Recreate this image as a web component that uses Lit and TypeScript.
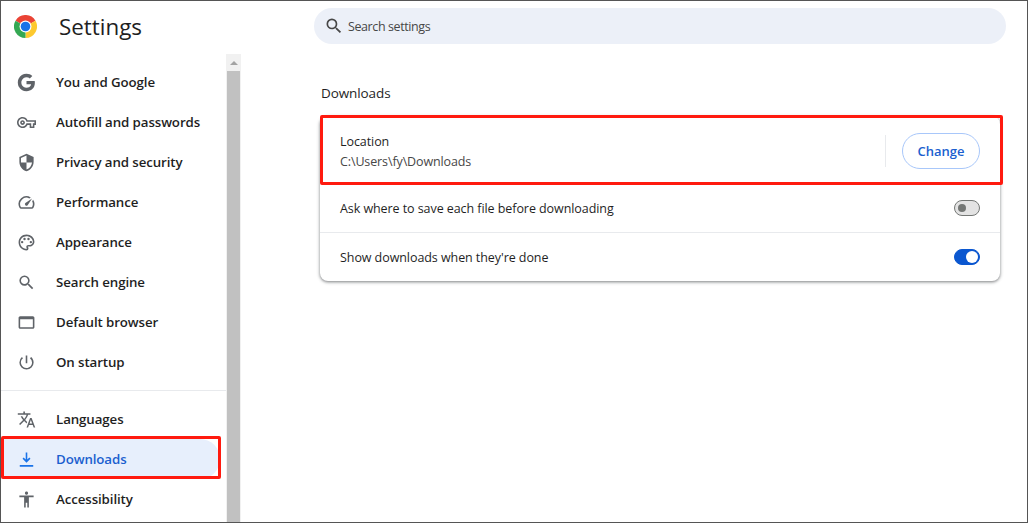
import { html, LitElement, css, svg } from 'lit';
import { customElement } from 'lit/decorators.js';

const icons: Record<string, unknown> = {
  google: svg`<path d="M22.56 12.25c0-.78-.07-1.53-.2-2.25H12v4.26h5.92c-.26 1.37-1.04 2.53-2.21 3.31v2.77h3.57c2.08-1.92 3.28-4.74 3.28-8.09z"/><path d="M12 23c2.97 0 5.46-.98 7.28-2.66l-3.57-2.77c-.98.66-2.23 1.06-3.71 1.06-2.86 0-5.29-1.93-6.16-4.53H2.18v2.84C3.99 20.53 7.7 23 12 23z"/><path d="M5.84 14.1c-.22-.66-.35-1.36-.35-2.1s.13-1.44.35-2.1V7.07H2.18C1.43 8.55 1 10.22 1 12s.43 3.45 1.18 4.93l3.66-2.83z"/><path d="M12 5.38c1.62 0 3.06.56 4.21 1.64l3.15-3.15C17.45 2.09 14.97 1 12 1 7.7 1 3.99 3.47 2.18 7.07l3.66 2.84c.87-2.6 3.3-4.53 6.16-4.53z"/>`,
  key: svg`<path d="M22 19h-6v-4h-2.68c-1.14 2.42-3.6 4-6.32 4-3.86 0-7-3.14-7-7s3.14-7 7-7c2.72 0 5.17 1.58 6.32 4H24v6h-2v4zm-4-2h2v-4h2v-2H11.94l-.23-.67C11.01 8.34 9.11 7 7 7c-2.76 0-5 2.24-5 5s2.24 5 5 5c2.11 0 4.01-1.34 4.71-3.33l.23-.67H18v4zM7 15c-1.65 0-3-1.35-3-3s1.35-3 3-3 3 1.35 3 3-1.35 3-3 3zm0-4c-.55 0-1 .45-1 1s.45 1 1 1 1-.45 1-1-.45-1-1-1z"/>`,
  shield: svg`<path d="M12 1L3 5v6c0 5.55 3.84 10.74 9 12 5.16-1.26 9-6.45 9-12V5l-9-4zm0 10.99h7c-.53 4.12-3.28 7.79-7 8.94V12H5V6.3l7-3.11v8.8z"/>`,
  speed: svg`<path d="M20.38 8.57l-1.23 1.85a8 8 0 0 1-.22 7.58H5.07A8 8 0 0 1 15.58 6.85l1.85-1.23A10 10 0 0 0 3.35 19a2 2 0 0 0 1.72 1h13.85a2 2 0 0 0 1.74-1 10 10 0 0 0-.27-10.44z"/><path d="M10.59 15.41a2 2 0 0 0 2.83 0l5.66-8.49-8.49 5.66a2 2 0 0 0 0 2.83z"/>`,
  palette: svg`<path d="M12 22C6.49 22 2 17.51 2 12S6.49 2 12 2s10 4.04 10 9c0 3.31-2.69 6-6 6h-1.77c-.28 0-.5.22-.5.5 0 .12.05.23.13.33.41.47.64 1.06.64 1.67A2.5 2.5 0 0 1 12 22zm0-18c-4.41 0-8 3.59-8 8s3.59 8 8 8c.28 0 .5-.22.5-.5a.54.54 0 0 0-.14-.35c-.41-.46-.63-1.05-.63-1.65a2.5 2.5 0 0 1 2.5-2.5H16c2.21 0 4-1.79 4-4 0-3.86-3.59-7-8-7z"/><circle cx="6.5" cy="11.5" r="1.5"/><circle cx="9.5" cy="7.5" r="1.5"/><circle cx="14.5" cy="7.5" r="1.5"/><circle cx="17.5" cy="11.5" r="1.5"/>`,
  search: svg`<path d="M15.5 14h-.79l-.28-.27A6.47 6.47 0 0 0 16 9.5 6.5 6.5 0 1 0 9.5 16c1.61 0 3.09-.59 4.23-1.57l.27.28v.79l5 4.99L20.49 19l-4.99-5zm-6 0C7.01 14 5 11.99 5 9.5S7.01 5 9.5 5 14 7.01 14 9.5 11.99 14 9.5 14z"/>`,
  browser: svg`<path d="M20 4H4c-1.11 0-2 .9-2 2v12c0 1.1.89 2 2 2h16c1.1 0 2-.9 2-2V6c0-1.1-.9-2-2-2zm0 14H4V8h16v10z"/>`,
  power: svg`<path d="M13 3h-2v10h2V3zm4.83 2.17l-1.42 1.42A6.92 6.92 0 0 1 19 12c0 3.87-3.13 7-7 7A6.995 6.995 0 0 1 7.58 6.58L6.17 5.17A8.932 8.932 0 0 0 3 12a9 9 0 0 0 18 0c0-2.74-1.23-5.18-3.17-6.83z"/>`,
  translate: svg`<path d="M12.87 15.07l-2.54-2.51.03-.03A17.52 17.52 0 0 0 14.07 6H17V4h-7V2H8v2H1v1.99h11.17C11.5 7.92 10.44 9.75 9 11.35 8.07 10.32 7.3 9.19 6.69 8h-2c.73 1.63 1.73 3.17 2.98 4.56l-5.09 5.02L4 19l5-5 3.11 3.11.76-2.04zM18.5 10h-2L12 22h2l1.12-3h4.75L21 22h2l-4.5-12zm-2.62 7l1.62-4.33L19.12 17h-3.24z"/>`,
  download: svg`<path d="M12 16l-5-5 1.4-1.45 2.6 2.6V3h2v9.15l2.6-2.6L17 11l-5 5zM3.5 21v-2h17v2h-17z"/>`,
  accessibility: svg`<path d="M12 2c1.1 0 2 .9 2 2s-.9 2-2 2-2-.9-2-2 .9-2 2-2zm9 7h-6v13h-2v-6h-2v6H9V9H3V7h18v2z"/>`,
};

const topItems = [
  ['google', 'You and Google'],
  ['key', 'Autofill and passwords'],
  ['shield', 'Privacy and security'],
  ['speed', 'Performance'],
  ['palette', 'Appearance'],
  ['search', 'Search engine'],
  ['browser', 'Default browser'],
  ['power', 'On startup'],
];

const bottomItems = [
  ['translate', 'Languages'],
  ['download', 'Downloads'],
  ['accessibility', 'Accessibility'],
];

@customElement('app-root')
export default class AppRoot extends LitElement {
  static styles = [
    css`
      :host {
        display: block;
        width: 1030px;
        height: 525px;
        background: #fff;
        font-family: 'Open Sans', 'Noto Sans', sans-serif;
        color: #1f1f1f;
        overflow: hidden;
      }
      .frame {
        position: relative;
        box-sizing: border-box;
        width: 1028px;
        height: 523px;
        border: 1px solid #555;
        display: flex;
        overflow: hidden;
      }
      .side {
        width: 240px;
        flex: none;
        display: flex;
        flex-direction: column;
      }
      .brand {
        height: 51px;
        flex: none;
        display: flex;
        align-items: center;
        padding: 0 0 2px 12.5px;
        gap: 22.5px;
      }
      .brand svg {
        width: 23px;
        height: 23px;
      }
      .brand h1 {
        margin: 0;
        font-size: 22.4px;
        font-weight: 400;
      }
      .side-body {
        flex: 1;
        display: flex;
        min-height: 0;
      }
      nav {
        width: 225px;
        flex: none;
        padding-top: 8px;
        overflow: hidden;
      }
      .item {
        height: 40px;
        width: 219px;
        box-sizing: border-box;
        display: flex;
        align-items: center;
        padding-left: 16px;
        gap: 20px;
        font-size: 13.3px;
        font-weight: 600;
        letter-spacing: -0.1px;
        border-radius: 0 20px 20px 0;
      }
      .item svg {
        width: 19px;
        height: 19px;
        flex: none;
        fill: #5f6368;
      }
      .item.active {
        background: #e7effc;
        color: #1b5fcf;
      }
      .item.active svg {
        fill: #1a73e8;
      }
      hr {
        border: 0;
        border-top: 1px solid #e8eaed;
        margin: 8px 0;
      }
      .scrollbar {
        width: 15px;
        flex: none;
        background: #f1f1f1;
        display: flex;
        flex-direction: column;
        align-items: center;
      }
      .arrow {
        height: 17px;
        flex: none;
        display: flex;
        align-items: center;
        justify-content: center;
      }
      .arrow i {
        border: 4px solid transparent;
        border-top: 0;
        border-bottom: 4px solid #a3a3a3;
      }
      .thumb {
        flex: 1;
        width: 13px;
        background: #c1c1c1;
      }
      main {
        flex: 1;
        min-width: 0;
      }
      .search {
        margin: 7px 0 0 73px;
        width: 692px;
        height: 36px;
        box-sizing: border-box;
        border-radius: 18px;
        background: #ecf0f8;
        display: flex;
        align-items: center;
        padding-left: 10px;
        gap: 4px;
        font-size: 12.5px;
        letter-spacing: -0.4px;
        color: #474747;
      }
      .search svg {
        width: 20px;
        height: 20px;
        fill: #474747;
      }
      .content {
        margin-left: 79px;
        width: 680px;
      }
      h2 {
        margin: 0;
        padding: 39px 0 13px 1px;
        font-size: 13.5px;
        line-height: 20px;
        font-weight: 400;
        letter-spacing: -0.1px;
      }
      .card {
        background: #fff;
        border-radius: 8px;
        box-shadow: 0 1px 3px 1px rgba(60, 64, 67, 0.3), 0 1px 2px rgba(60, 64, 67, 0.3);
        font-size: 12.5px;
        letter-spacing: -0.07px;
      }
      .row {
        box-sizing: border-box;
        display: flex;
        align-items: center;
        justify-content: space-between;
        padding: 0 20px;
        height: 48px;
      }
      .row + .row {
        border-top: 1px solid #e8eaed;
      }
      .row + .row + .row {
        height: 49px;
      }
      .row.location {
        height: 68px;
        padding-top: 2px;
      }
      .row.location + .row {
        border-top: 0;
      }
      .path {
        color: #474747;
        margin-top: 3px;
        letter-spacing: -0.12px;
      }
      .actions {
        display: flex;
        align-items: center;
        gap: 16px;
      }
      .sep {
        width: 1px;
        height: 32px;
        background: #e8eaed;
      }
      button {
        width: 78px;
        height: 36px;
        border: 1px solid #a8c7fa;
        border-radius: 18px;
        background: #fff;
        color: #1b5fcf;
        font: 600 13px 'Open Sans', 'Noto Sans', sans-serif;
        padding: 0;
      }
      .toggle {
        box-sizing: border-box;
        width: 26px;
        height: 16px;
        border-radius: 8px;
        border: 1px solid #747775;
        background: #e3e3e3;
        display: flex;
        align-items: center;
        padding-left: 3px;
      }
      .toggle i {
        width: 8px;
        height: 8px;
        border-radius: 50%;
        background: #747775;
      }
      .toggle.on {
        background: #0b57d0;
        border-color: #0b57d0;
        justify-content: flex-end;
        padding: 0 1px 0 0;
      }
      .toggle.on i {
        width: 12px;
        height: 12px;
        background: #fff;
      }
      .mark {
        position: absolute;
        box-sizing: border-box;
        border: 3px solid #ff1a0f;
        border-radius: 2px;
        pointer-events: none;
      }
      .mark.nav-mark {
        left: 0;
        top: 435px;
        width: 220px;
        height: 43px;
      }
      .mark.card-mark {
        left: 319px;
        top: 114px;
        width: 683px;
        height: 70px;
      }
    `
  ];

  renderItem(item: string[], active = false) {
    return html`
      <div class="item ${active ? 'active' : ''}">
        <svg viewBox="0 0 24 24">${icons[item[0]]}</svg>
        <span>${item[1]}</span>
      </div>
    `;
  }

  render() {
    return html`
      <div class="frame">
        <div class="side">
          <div class="brand">
            <svg viewBox="0 0 48 48">
              <path d="M24 24 L3.2 12 A24 24 0 0 1 44.8 12 Z" fill="#ea4335"/>
              <path d="M24 24 L44.8 12 A24 24 0 0 1 24 48 Z" fill="#fdc92f"/>
              <path d="M24 24 L24 48 A24 24 0 0 1 3.2 12 Z" fill="#34a853"/>
              <circle cx="24" cy="24" r="12.5" fill="#fff"/>
              <circle cx="24" cy="24" r="10" fill="#1a73e8"/>
            </svg>
            <h1>Settings</h1>
          </div>
          <div class="side-body">
            <nav>
              ${topItems.map((i) => this.renderItem(i))}
              <hr />
              ${bottomItems.map((i) => this.renderItem(i, i[0] === 'download'))}
            </nav>
            <div class="scrollbar">
              <div class="arrow"><i></i></div>
              <div class="thumb"></div>
            </div>
          </div>
        </div>
        <main>
          <div class="search">
            <svg viewBox="0 0 24 24">${icons.search}</svg>
            <span>Search settings</span>
          </div>
          <div class="content">
            <h2>Downloads</h2>
            <div class="card">
              <div class="row location">
                <div>
                  <div>Location</div>
                  <div class="path">C:\\Users\\fy\\Downloads</div>
                </div>
                <div class="actions">
                  <div class="sep"></div>
                  <button>Change</button>
                </div>
              </div>
              <div class="row">
                <span>Ask where to save each file before downloading</span>
                <div class="toggle"><i></i></div>
              </div>
              <div class="row">
                <span>Show downloads when they're done</span>
                <div class="toggle on"><i></i></div>
              </div>
            </div>
          </div>
        </main>
        <div class="mark nav-mark"></div>
        <div class="mark card-mark"></div>
      </div>
    `;
  }
}
